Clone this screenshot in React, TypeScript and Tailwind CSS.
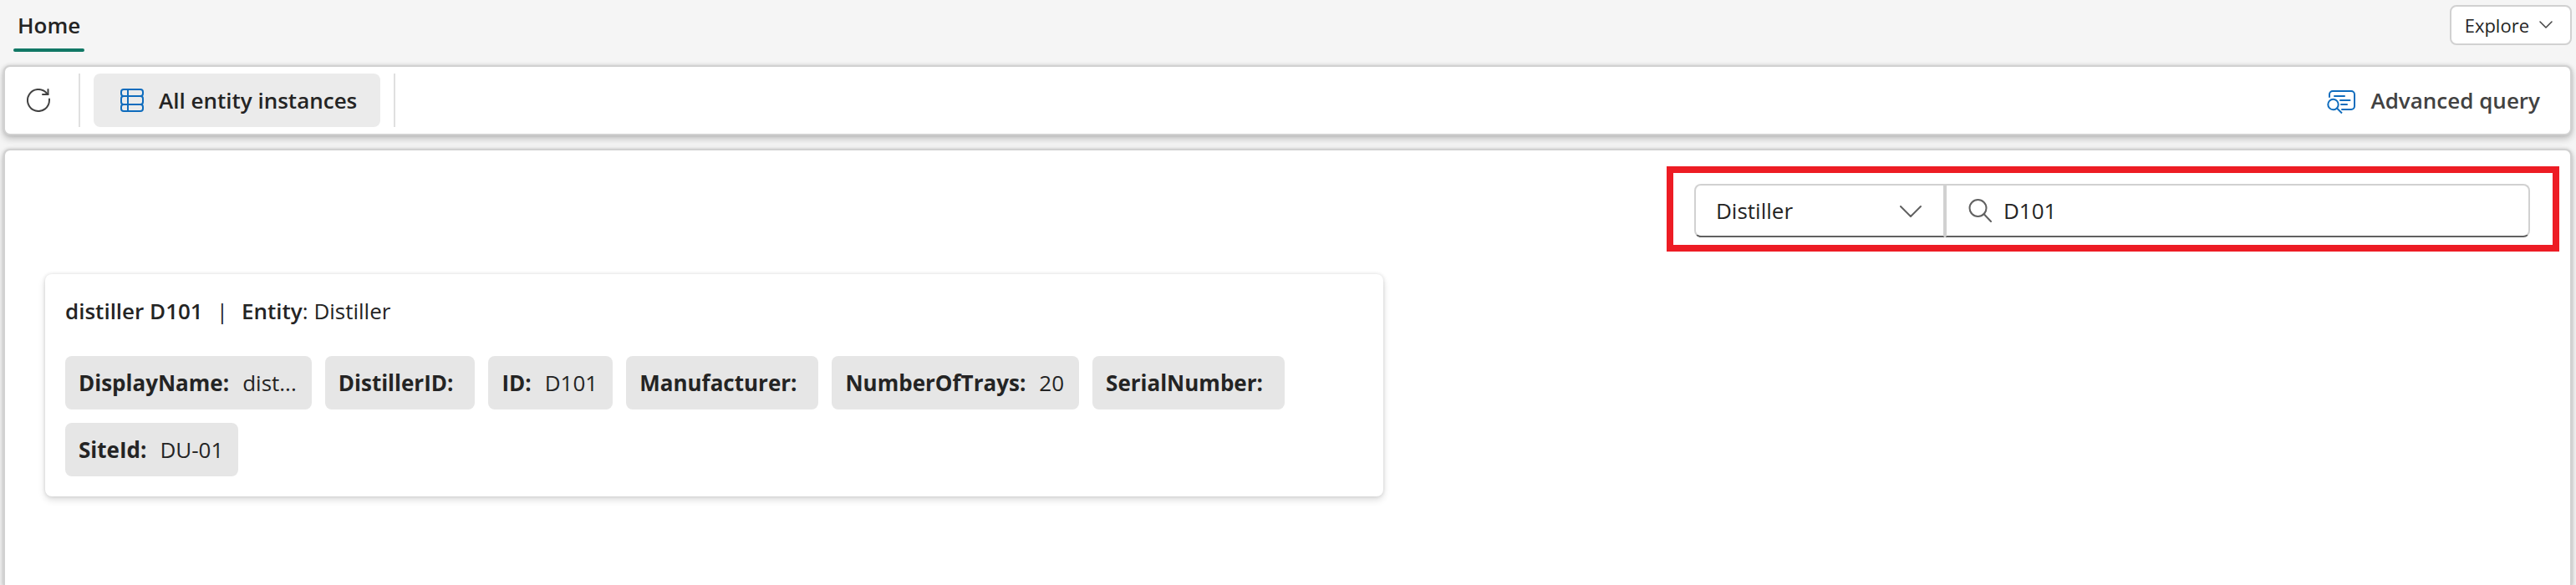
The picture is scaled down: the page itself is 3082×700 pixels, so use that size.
import React from "react";

type Property = { name: string; value?: string };

const properties: Property[] = [
  { name: "DisplayName", value: "dist..." },
  { name: "DistillerID" },
  { name: "ID", value: "D101" },
  { name: "Manufacturer" },
  { name: "NumberOfTrays", value: "20" },
  { name: "SerialNumber" },
  { name: "SiteId", value: "DU-01" },
];

function RefreshIcon() {
  return (
    <svg className="size-7" viewBox="0 0 28 28" fill="none" stroke="#424242" strokeWidth="2" aria-hidden="true">
      <path d="M27 12.5v1.5a13 13 0 1 1-3.6-9l2 2" strokeLinecap="round" />
      <path d="M25.500 1v6h-6.500" strokeLinecap="round" strokeLinejoin="round" />
    </svg>
  );
}

function TableIcon() {
  return (
    <svg className="size-7" viewBox="0 0 28 28" fill="none" stroke="#0f6cbd" strokeWidth="2" aria-hidden="true">
      <rect x="1" y="1" width="26" height="8" rx="3" />
      <rect x="1" y="9" width="26" height="10" rx="3" />
      <rect x="1" y="19" width="26" height="8" rx="3" />
      <path d="M9 1v26" />
    </svg>
  );
}

function QueryIcon() {
  return (
    <svg className="h-8 w-[34px]" viewBox="0 -4 34 32" fill="none" stroke="#0f6cbd" strokeWidth="2" aria-hidden="true">
      <path d="M3 8V5a4 4 0 0 1 4-4h22a4 4 0 0 1 4 4v14a4 4 0 0 1-4 4H18" strokeLinecap="round" />
      <path d="M9 7h12M16 12h11.500M17 17h7" strokeLinecap="round" />
      <circle cx="7.500" cy="17" r="6.200" />
      <path d="M12 21.500l6 6" />
    </svg>
  );
}

function SearchIcon() {
  return (
    <svg className="size-7 shrink-0" viewBox="0 0 28 28" fill="none" stroke="#616161" strokeWidth="2" aria-hidden="true">
      <circle cx="11.500" cy="11" r="10" />
      <path d="M18.500 18l8.500 9" strokeLinecap="round" />
    </svg>
  );
}

function Divider() {
  return <div className="h-16 w-0.5 bg-[#e0e0e0]" />;
}

function Chip({ name, value }: Property) {
  return (
    <li className={`flex h-16 items-center gap-4 rounded-lg bg-[#e6e6e6] pl-4 ${value ? "pr-[18px]" : "pr-[26px]"}`}>
      <span className="font-bold">{name}:</span>
      {value && <span>{value}</span>}
    </li>
  );
}

export default function App() {
  return (
    <div className="flex min-h-screen flex-col overflow-hidden bg-[#f5f5f5] pr-[5px] pl-1 font-['Open_Sans','Noto_Sans',sans-serif] text-[26px] leading-9 text-[#242424]">
      <header className="flex h-[78px] items-start justify-between">
        <nav className="ml-3">
          <a href="#home" className="relative block px-[5px] pt-3 pb-3.5 font-semibold">
            Home
            <span className="absolute inset-x-0 bottom-0 h-1 rounded-full bg-[#117865]" />
          </a>
        </nav>
        <button className="mt-1.5 flex h-12 items-center gap-3 rounded-lg border-2 border-[#d1d1d1] bg-white pr-[21px] pl-4 text-[22px]">
          Explore
          <svg className="h-2.5 w-4" viewBox="0 0 16 10" fill="none" stroke="#424242" strokeWidth="1.500" aria-hidden="true">
            <path d="M1 1l7 7 7-7" strokeLinecap="round" strokeLinejoin="round" />
          </svg>
        </button>
      </header>

      <div
        role="toolbar"
        aria-label="Entity tools"
        className="flex h-[84px] items-center rounded-lg border-2 border-[#d1d1d1] bg-white shadow-[0_0_4px_#0000001f,0_4px_8px_#00000038]"
      >
        <button aria-label="Refresh" className="px-[26px]">
          <RefreshIcon />
        </button>
        <div className="ml-2 flex items-center gap-4">
          <Divider />
          <button className="flex h-16 items-center gap-[18px] rounded-lg bg-[#ebebeb] pr-7 pl-8 font-semibold">
            <TableIcon />
            All entity instances
          </button>
          <Divider />
        </div>
        <button className="mr-9 ml-auto flex items-center gap-[18px] font-semibold text-[#424242]">
          <QueryIcon />
          Advanced query
        </button>
      </div>

      <main className="mt-4 flex flex-1 flex-col rounded-t-lg border-2 border-b-0 border-[#d1d1d1] bg-white shadow-[0_0_4px_#0000001f,0_4px_8px_#00000038]">
        <form
          onSubmit={(event) => event.preventDefault()}
          className="mt-[19px] mr-[13px] ml-auto flex border-8 border-[#ed1c24] pt-[13px] pr-[27px] pb-[9px] pl-[25px]"
        >
          <div className="relative">
            <select
              aria-label="Entity type"
              defaultValue="Distiller"
              className="h-16 w-[300px] appearance-none rounded-l-lg border-2 border-[#d1d1d1] border-b-[#616161] bg-white px-6"
            >
              <option>Distiller</option>
            </select>
            <svg
              className="pointer-events-none absolute top-[26px] right-7 h-3.5 w-[26px]"
              viewBox="0 0 26 14"
              fill="none"
              stroke="#616161"
              strokeWidth="2"
              aria-hidden="true"
            >
              <path d="M1 1l12 12 12-12" strokeLinecap="round" strokeLinejoin="round" />
            </svg>
          </div>
          <label className="flex h-16 w-[700px] items-center gap-3.5 rounded-r-lg border-2 border-[#d1d1d1] border-b-[#616161] bg-white px-[26px]">
            <SearchIcon />
            <input aria-label="Search" type="text" defaultValue="D101" className="min-w-0 flex-1 outline-none" />
          </label>
        </form>

        <article className="mt-[27px] ml-12 w-[1601px] rounded-lg bg-white p-6 shadow-[0_0_4px_#0000001f,0_4px_8px_#00000024]">
          <h2 className="mt-0.5 flex gap-4">
            <span className="font-semibold">distiller D101</span>
            <span>|</span>
            <span>
              <span className="font-semibold">Entity</span>: Distiller
            </span>
          </h2>
          <ul className="mt-9 flex flex-wrap gap-4">
            {properties.map((property) => (
              <Chip key={property.name} {...property} />
            ))}
          </ul>
        </article>
      </main>
    </div>
  );
}
